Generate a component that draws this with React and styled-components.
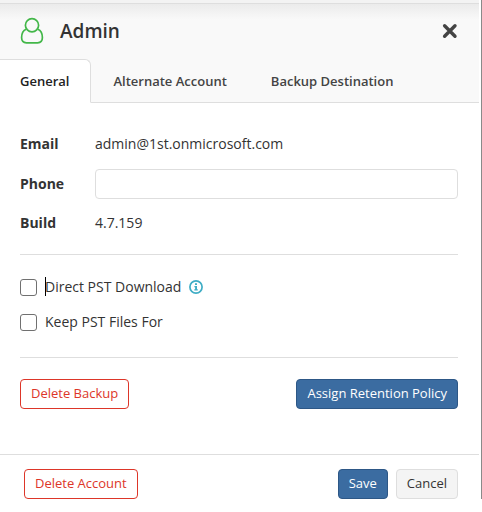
import React from "react";
import styled, { createGlobalStyle, css } from "styled-components";

const tabs = ["General", "Alternate Account", "Backup Destination"];

const UserIcon = () => (
  <svg width="24" height="28" viewBox="0 0 24 28" fill="none" aria-hidden="true">
    <path
      d="M6.2 12.2C3 13.4 1.6 16.8 1.6 20.6c0 3.4 1.7 5.2 4.8 5.2h11.2c3.1 0 4.8-1.8 4.8-5.2 0-3.8-1.4-7.2-4.6-8.4"
      stroke="#43b749"
      strokeWidth="1.7"
    />
    <circle cx="12" cy="8.2" r="6.6" stroke="#43b749" strokeWidth="1.7" />
  </svg>
);

const CloseIcon = () => (
  <svg width="16" height="16" viewBox="0 0 16 16" aria-hidden="true">
    <path
      d="M2.6 2.8l10.4 10.4M13 2.8L2.6 13.2"
      stroke="#444"
      strokeWidth="3.4"
      strokeLinecap="round"
    />
  </svg>
);

const InfoIcon = () => (
  <svg width="14" height="14" viewBox="0 0 14 14" fill="none" aria-hidden="true">
    <circle cx="7" cy="7" r="6.1" stroke="#3fadc5" strokeWidth="1.7" />
    <path
      d="M6 3.3h2v1.7H6zM5.4 6H8v3.2h.8v1.3H5.3V9.2h.8V7.3h-.7z"
      fill="#3fadc5"
    />
  </svg>
);

const App = () => {
  return (
    <Page>
      <GlobalStyle />
      <Panel>
        <Header>
          <UserIcon />
          <Title>Admin</Title>
          <CloseButton type="button" aria-label="Close">
            <CloseIcon />
          </CloseButton>
        </Header>

        <TabList role="tablist">
          {tabs.map((tab, index) => (
            <Tab
              key={tab}
              type="button"
              role="tab"
              aria-selected={index === 0}
              $active={index === 0}
            >
              {tab}
            </Tab>
          ))}
        </TabList>

        <Content>
          <Fields>
            <FieldName>Email</FieldName>
            <span>admin@1st.onmicrosoft.com</span>
            <FieldName as="label" htmlFor="phone">
              Phone
            </FieldName>
            <TextField type="text" id="phone" />
            <FieldName>Build</FieldName>
            <span>4.7.159</span>
          </Fields>

          <Options>
            <Option>
              <Checkbox type="checkbox" id="direct-download" />
              <OptionLabel htmlFor="direct-download">
                <Caret />
                Direct PST Download
              </OptionLabel>
              <InfoButton type="button" aria-label="Info">
                <InfoIcon />
              </InfoButton>
            </Option>
            <Option>
              <Checkbox type="checkbox" id="keep-files" />
              <OptionLabel htmlFor="keep-files">Keep PST Files For</OptionLabel>
            </Option>
          </Options>

          <Actions>
            <Button type="button" $variant="danger">
              Delete Backup
            </Button>
            <Button type="button" $variant="primary">
              Assign Retention Policy
            </Button>
          </Actions>
        </Content>

        <Footer>
          <Button type="button" $variant="danger">
            Delete Account
          </Button>
          <ButtonGroup>
            <Button type="button" $variant="primary">
              Save
            </Button>
            <Button type="button">Cancel</Button>
          </ButtonGroup>
        </Footer>
      </Panel>
    </Page>
  );
};

const GlobalStyle = createGlobalStyle`
  *,
  *::before,
  *::after {
    box-sizing: border-box;
  }

  body {
    margin: 0;
    background: #fff;
    color: #333;
    font-family: "Open Sans", "Noto Sans", sans-serif;
    font-size: 14px;
    line-height: 20px;
  }

  button,
  input {
    font-family: inherit;
  }
`;

const Page = styled.main`
  padding-right: 2px;
  border-right: 1px solid #8a8a8a;
`;

const Panel = styled.section`
  border-top: 3px solid #f3f3f3;
`;

const Header = styled.header`
  display: flex;
  align-items: center;
  height: 56px;
  padding: 0 21px 2px 20px;
  border-top: 1px solid #dedede;
  background: linear-gradient(#ebebeb, #f9f9f9 16px);
`;

const Title = styled.h1`
  flex: 1;
  margin: 0 0 0 16px;
  color: #333;
  font-size: 19px;
  font-weight: 600;
  line-height: 28px;
`;

const CloseButton = styled.button`
  display: flex;
  padding: 0;
  border: 0;
  background: none;
  cursor: pointer;
`;

const TabList = styled.div`
  display: flex;
  height: 44px;
  background: #f9f9f9;
  box-shadow: inset 0 -1px #dedede;
`;

const Tab = styled.button`
  padding: 0 20px;
  border: 1px solid transparent;
  border-left: 0;
  background: none;
  color: #444;
  font-size: 13px;
  font-weight: 600;
  cursor: pointer;

  & + & {
    padding: 0 21px 0 22px;
  }

  ${({ $active }) =>
    $active &&
    css`
      padding-right: 21px;
      border-color: #dedede;
      border-bottom-color: #fff;
      border-top-right-radius: 6px;
      background: #fff;
      color: #222;
    `}
`;

const Content = styled.div`
  padding: 26px 21px 45px 20px;
`;

const Fields = styled.div`
  display: grid;
  grid-template-columns: 75px 1fr;
  align-items: center;
  grid-template-rows: 30px 30px 28px;
  row-gap: 10px;
  padding-bottom: 17px;
`;

const FieldName = styled.span`
  font-weight: 700;
`;

const TextField = styled.input`
  width: 100%;
  height: 30px;
  padding: 0 10px;
  border: 1px solid #dedede;
  border-radius: 4px;
  color: #333;
  font-size: 14px;
`;

const Options = styled.div`
  display: flex;
  flex-direction: column;
  gap: 15px;
  padding: 22px 0 25px;
  border-top: 1px solid #dedede;
  border-bottom: 1px solid #dedede;
`;

const Option = styled.div`
  display: flex;
  align-items: center;
  gap: 8px;
  height: 20px;
`;

const Checkbox = styled.input`
  appearance: none;
  width: 17px;
  height: 17px;
  margin: 0;
  border: 1px solid #707070;
  border-radius: 3px;
  background: #fff;

  &:checked {
    background: #3b6ca1;
  }
`;

const OptionLabel = styled.label`
  position: relative;
`;

const Caret = styled.span`
  position: absolute;
  top: 0;
  left: 0;
  width: 1px;
  height: 19px;
  background: #000;
`;

const InfoButton = styled(CloseButton)``;

const Actions = styled.div`
  display: flex;
  justify-content: space-between;
  padding-top: 21px;
`;

const Footer = styled.footer`
  display: flex;
  justify-content: space-between;
  padding: 14px 21px 0 24px;
  border-top: 1px solid #dedede;
`;

const ButtonGroup = styled.div`
  display: flex;
  gap: 8px;
`;

const variants = {
  danger: css`
    border-color: #dd3629;
    background: #fff;
    color: #dd3629;
  `,
  primary: css`
    border-color: #2d5786;
    background: #3b6ca1;
    color: #fff;
  `,
  plain: css`
    border-color: #dedede;
    background: #f4f4f4;
    color: #333;
  `,
};

const Button = styled.button`
  height: 30px;
  padding: 0 10px 2px;
  border: 1px solid;
  border-radius: 4px;
  font-size: 13px;
  cursor: pointer;

  ${({ $variant }) => variants[$variant || "plain"]}
`;

export default App;
